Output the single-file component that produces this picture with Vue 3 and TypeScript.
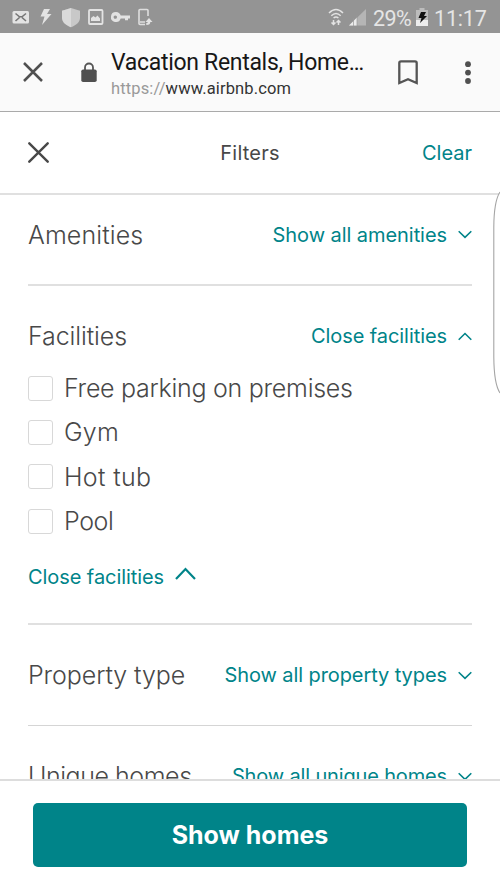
<script setup lang="ts">
import { ref } from 'vue'

interface Facility {
  name: string
  cls: string
  checked: boolean
}

const facilities = ref<Facility[]>([
  { name: 'Free parking on premises', cls: 'parking', checked: false },
  { name: 'Gym', cls: 'gym', checked: false },
  { name: 'Hot tub', cls: 'tub', checked: false },
  { name: 'Pool', cls: 'pool', checked: false },
])
</script>

<template>
  <div class="screen">
    <div class="status">
      <svg class="status-icons" width="160" height="33" viewBox="0 0 160 33">
        <g fill="#e3e3e3">
          <rect x="12.5" y="11" width="16.5" height="12.5" rx="1.5" />
          <path d="M44 9h6l-3 5h4.500L42 25l2.500-8.500H40.500z" />
          <path d="M71 8l9 2.800v7c0 4.500-4 7.500-9 9.500-5-2-9-5-9-9.500v-7z" opacity=".65" />
          <path d="M71 8l-9 2.800v7c0 4.500 4 7.500 9 9.500z" opacity=".65" />
          <path d="M91 21v-3l2.500-2 2 1.500 2-2 2.500 3V21z" />
          <path fill-rule="evenodd" d="M116 12a5 5 0 0 1 4.700 3.500H130v3h-2v1.800h-3v-1.800h-4.300A5 5 0 1 1 116 12zm-.7 3.400a1.700 1.700 0 1 0 .01 0z" />
          <path d="M149 18l3.500 4h-2.200c0 2-1 3-4 3v-2c1 0 1.500-.4 1.500-1h-2.300z" />
        </g>
        <path d="M15.500 13.500l4 3.300h2.500l4-3.300M15.500 21l4-3.500M26 21l-4-3.500" fill="none" stroke="#777" stroke-width="1.600" />
        <rect x="89" y="10" width="13.500" height="14" rx="1" fill="none" stroke="#e3e3e3" stroke-width="1.800" />
        <path d="M148 16V10.500q0-1-1-1h-7q-1 0-1 1v13q0 1 1 1h5M140 22h5" fill="none" stroke="#dedede" stroke-width="1.600" />
      </svg>
      <div class="status-right">
        <svg width="40" height="33" viewBox="0 0 40 33">
          <g fill="none" stroke="#e3e3e3" stroke-width="1.500">
            <path d="M1 13q7-7 14 0M3.300 15.700q4.700-4.500 9.400 0M5.600 18q2.400-2 4.800 0" />
            <path d="M5.500 20v4M3.500 22.500l2 2 2-2M10.500 25v-4M8.500 22.500l2-2 2 2" />
          </g>
          <path d="M38 9v16.500H21z" fill="#b5b5b5" />
          <path d="M29 17.500v8h-8z" fill="#ececec" />
          <path d="M25.500 18v8M29 15v11" stroke="#999" stroke-width=".7" />
        </svg>
        <span class="percent">29%</span>
        <svg class="battery" width="12" height="18" viewBox="0 0 12 18">
          <path d="M3.500 0h5v2H12v16H0V2h3.500z" fill="#bcbcbc" />
          <path d="M0 12h12v6H0z" fill="#ededed" />
          <path d="M5 4h5L8 8h3l-7 7 1.500-5H2.500z" fill="#111" />
        </svg>
        <span class="clock">11:17</span>
      </div>
    </div>

    <div class="browser">
      <svg class="tab-close" width="20" height="20" viewBox="0 0 20 20"><path d="M1 1l18 18M19 1L1 19" stroke="#505050" stroke-width="2.500" /></svg>
      <svg class="lock" width="16" height="21" viewBox="0 0 16 21">
        <path d="M4 9V5.500a4 4 0 0 1 8 0V9" fill="none" stroke="#555" stroke-width="1.800" />
        <rect x=".3" y="7.500" width="15.400" height="12.500" rx="1.800" fill="#505050" />
      </svg>
      <div class="page-info">
        <div class="page-title">Vacation Rentals, Home…</div>
        <div class="page-url"><span>https://</span>www.airbnb.com</div>
      </div>
      <svg class="bookmark" width="20" height="26" viewBox="0 0 20 26"><path d="M1.300 23V3q0-1.700 1.700-1.700h14q1.700 0 1.700 1.700v20L10 19.200z" fill="none" stroke="#555" stroke-width="2.300" /></svg>
      <svg class="dots" width="6" height="24" viewBox="0 0 6 24" fill="#505050"><circle cx="3" cy="3.200" r="2.900" /><circle cx="3" cy="11.600" r="2.900" /><circle cx="3" cy="20" r="2.900" /></svg>
    </div>

    <header class="filters">
      <svg width="21" height="21" viewBox="0 0 21 21"><path d="M1.300 1.300l18.400 18.400M19.700 1.300L1.300 19.700" stroke="#484848" stroke-width="2.400" stroke-linecap="round" /></svg>
      <span class="filters-title">Filters</span>
      <a class="clear">Clear</a>
    </header>

    <main class="content">
      <section class="section single">
        <h2 class="amenities">Amenities</h2>
        <a class="toggle t-amenities"><span>Show all amenities</span>
          <svg width="14" height="9" viewBox="0 0 14 9"><path d="M.7 1.200L7 7.400l6.300-6.200" /></svg></a>
      </section>

      <section class="group">
        <div class="section">
          <h2 class="fac">Facilities</h2>
          <a class="toggle t-fac"><span>Close facilities</span>
            <svg width="14" height="9" viewBox="0 0 14 9"><path d="M.7 7.700L7 1.500l6.300 6.200" /></svg></a>
        </div>
        <div class="options">
          <label v-for="f in facilities" :key="f.name" class="option" @click="f.checked = !f.checked">
            <span class="box" :class="{ on: f.checked }"></span>
            <span :class="f.cls">{{ f.name }}</span>
          </label>
        </div>
        <a class="toggle bottom-toggle t-fac"><span>Close facilities</span>
          <svg width="21" height="14" viewBox="0 0 21 14"><path d="M1 12L10.500 2l9.500 10" /></svg></a>
      </section>

      <section class="section single">
        <h2 class="property">Property type</h2>
        <a class="toggle t-property"><span>Show all property types</span>
          <svg width="14" height="9" viewBox="0 0 14 9"><path d="M.7 1.200L7 7.400l6.300-6.200" /></svg></a>
      </section>

      <section class="section single">
        <h2 class="unique">Unique homes</h2>
        <a class="toggle t-unique"><span>Show all unique homes</span>
          <svg width="14" height="9" viewBox="0 0 14 9"><path d="M.7 1.200L7 7.400l6.300-6.200" /></svg></a>
      </section>
    </main>

    <footer class="footer"><button class="submit">Show homes</button></footer>

    <svg class="edge" width="8" height="204" viewBox="0 0 8 204"><path d="M8 1Q2 10 1.800 36V166Q2 193 8 202" fill="#fff" stroke="#a5a5a5" stroke-width="1.100" /></svg>
  </div>
</template>

<style>
body { margin: 0; overflow: hidden; }
</style>

<style scoped>
.screen {
  position: relative;
  display: flex;
  flex-direction: column;
  width: 500px;
  height: 889px;
  overflow: hidden;
  background: #fff;
  color: #484848;
  font-family: Inter, "Liberation Sans", sans-serif;
}
svg { flex: none; display: block; }
.status {
  display: flex;
  justify-content: space-between;
  flex: none;
  height: 33px;
  background: #949494;
  color: #e5e5e5;
  font-family: Roboto, sans-serif;
  font-size: 21.500px;
}
.status-right { display: flex; align-items: center; width: 172px; }
.percent { width: 43px; margin-left: 5px; padding-top: 3px; letter-spacing: -.6px; }
.battery { margin-top: 1px; }
.clock { margin-left: 6px; padding-top: 3px; white-space: nowrap; letter-spacing: -.2px; }
.browser {
  box-sizing: border-box;
  display: flex;
  flex: none;
  height: 79px;
  padding: 0 29px 0 23px;
  align-items: center;
  background: #fafafa;
  border-bottom: 1px solid #aaa;
  font-family: Roboto, sans-serif;
}
.lock { margin-left: 38px; }
.page-info { width: 260px; margin-left: 14px; padding-top: 4px; }
.page-title { font-size: 23px; line-height: 28px; letter-spacing: -.31px; color: #171717; white-space: nowrap; }
.page-url { font-size: 16.500px; line-height: 22px; padding-top: 1px; letter-spacing: .14px; color: #333; }
.page-url span { color: #999; }
.bookmark { margin-left: 27px; margin-top: 2px; }
.dots { margin-left: auto; margin-top: 1px; }
.filters {
  box-sizing: border-box;
  display: grid;
  grid-template-columns: 1fr auto 1fr;
  align-items: center;
  flex: none;
  height: 83px;
  padding: 0 28px;
  border-bottom: 2px solid #e0e0e0;
  font-size: 20px;
}
.filters-title { letter-spacing: .2px; }
.clear { justify-self: end; color: #008489; }
.content { flex: 1; min-height: 0; overflow: hidden; padding: 0 28px; }
.section { display: flex; justify-content: space-between; align-items: center; }
.single { box-sizing: border-box; height: 101px; border-bottom: 1px solid #d5d5d5; }
.single:first-child { height: 91px; padding-bottom: 10px; border-bottom: 2px solid #e0e0e0; }
h2 { margin: 0; font-size: 25px; font-weight: 300; white-space: nowrap; }
.amenities { letter-spacing: .1px; }
.fac { letter-spacing: -.1px; }
.property { letter-spacing: -.1px; }
.unique { letter-spacing: -.45px; }
.toggle { display: flex; align-items: center; gap: 11px; color: #008489; font-size: 20px; white-space: nowrap; }
.t-amenities { letter-spacing: -.06px; }
.t-fac { letter-spacing: -.07px; }
.t-property { letter-spacing: -.08px; }
.t-unique { letter-spacing: -.15px; }
.toggle path { fill: none; stroke: #008489; stroke-width: 1.600; }
.group { box-sizing: border-box; height: 339px; border-bottom: 2px solid #e0e0e0; }
.group .section { box-sizing: border-box; height: 80px; padding-top: 20px; }
.options { display: flex; flex-direction: column; }
.option { display: flex; align-items: center; gap: 11px; height: 44.300px; font-size: 25px; font-weight: 300; white-space: nowrap; }
.parking { letter-spacing: -.27px; }
.gym { letter-spacing: .2px; }
.tub { letter-spacing: .35px; }
.pool { letter-spacing: -.4px; }
.box { box-sizing: border-box; width: 25px; height: 25px; border: 1.500px solid #d8d8d8; border-radius: 3px; background: #fff; }
.box.on { background: #008489; border-color: #008489; }
.bottom-toggle { margin-top: 22px; }
.bottom-toggle svg { margin-bottom: 6px; }
.bottom-toggle path { stroke-width: 2.200; }
.footer { box-sizing: border-box; flex: none; height: 110px; padding: 22px 33px; border-top: 2px solid #ddd; background: #fff; }
.submit { display: block; width: 434px; height: 64px; padding: 0; border: 0; border-radius: 5px; background: #008489; color: #fff; font: 700 25px Inter, sans-serif; }
.edge { position: absolute; right: 0; top: 191px; }
</style>
